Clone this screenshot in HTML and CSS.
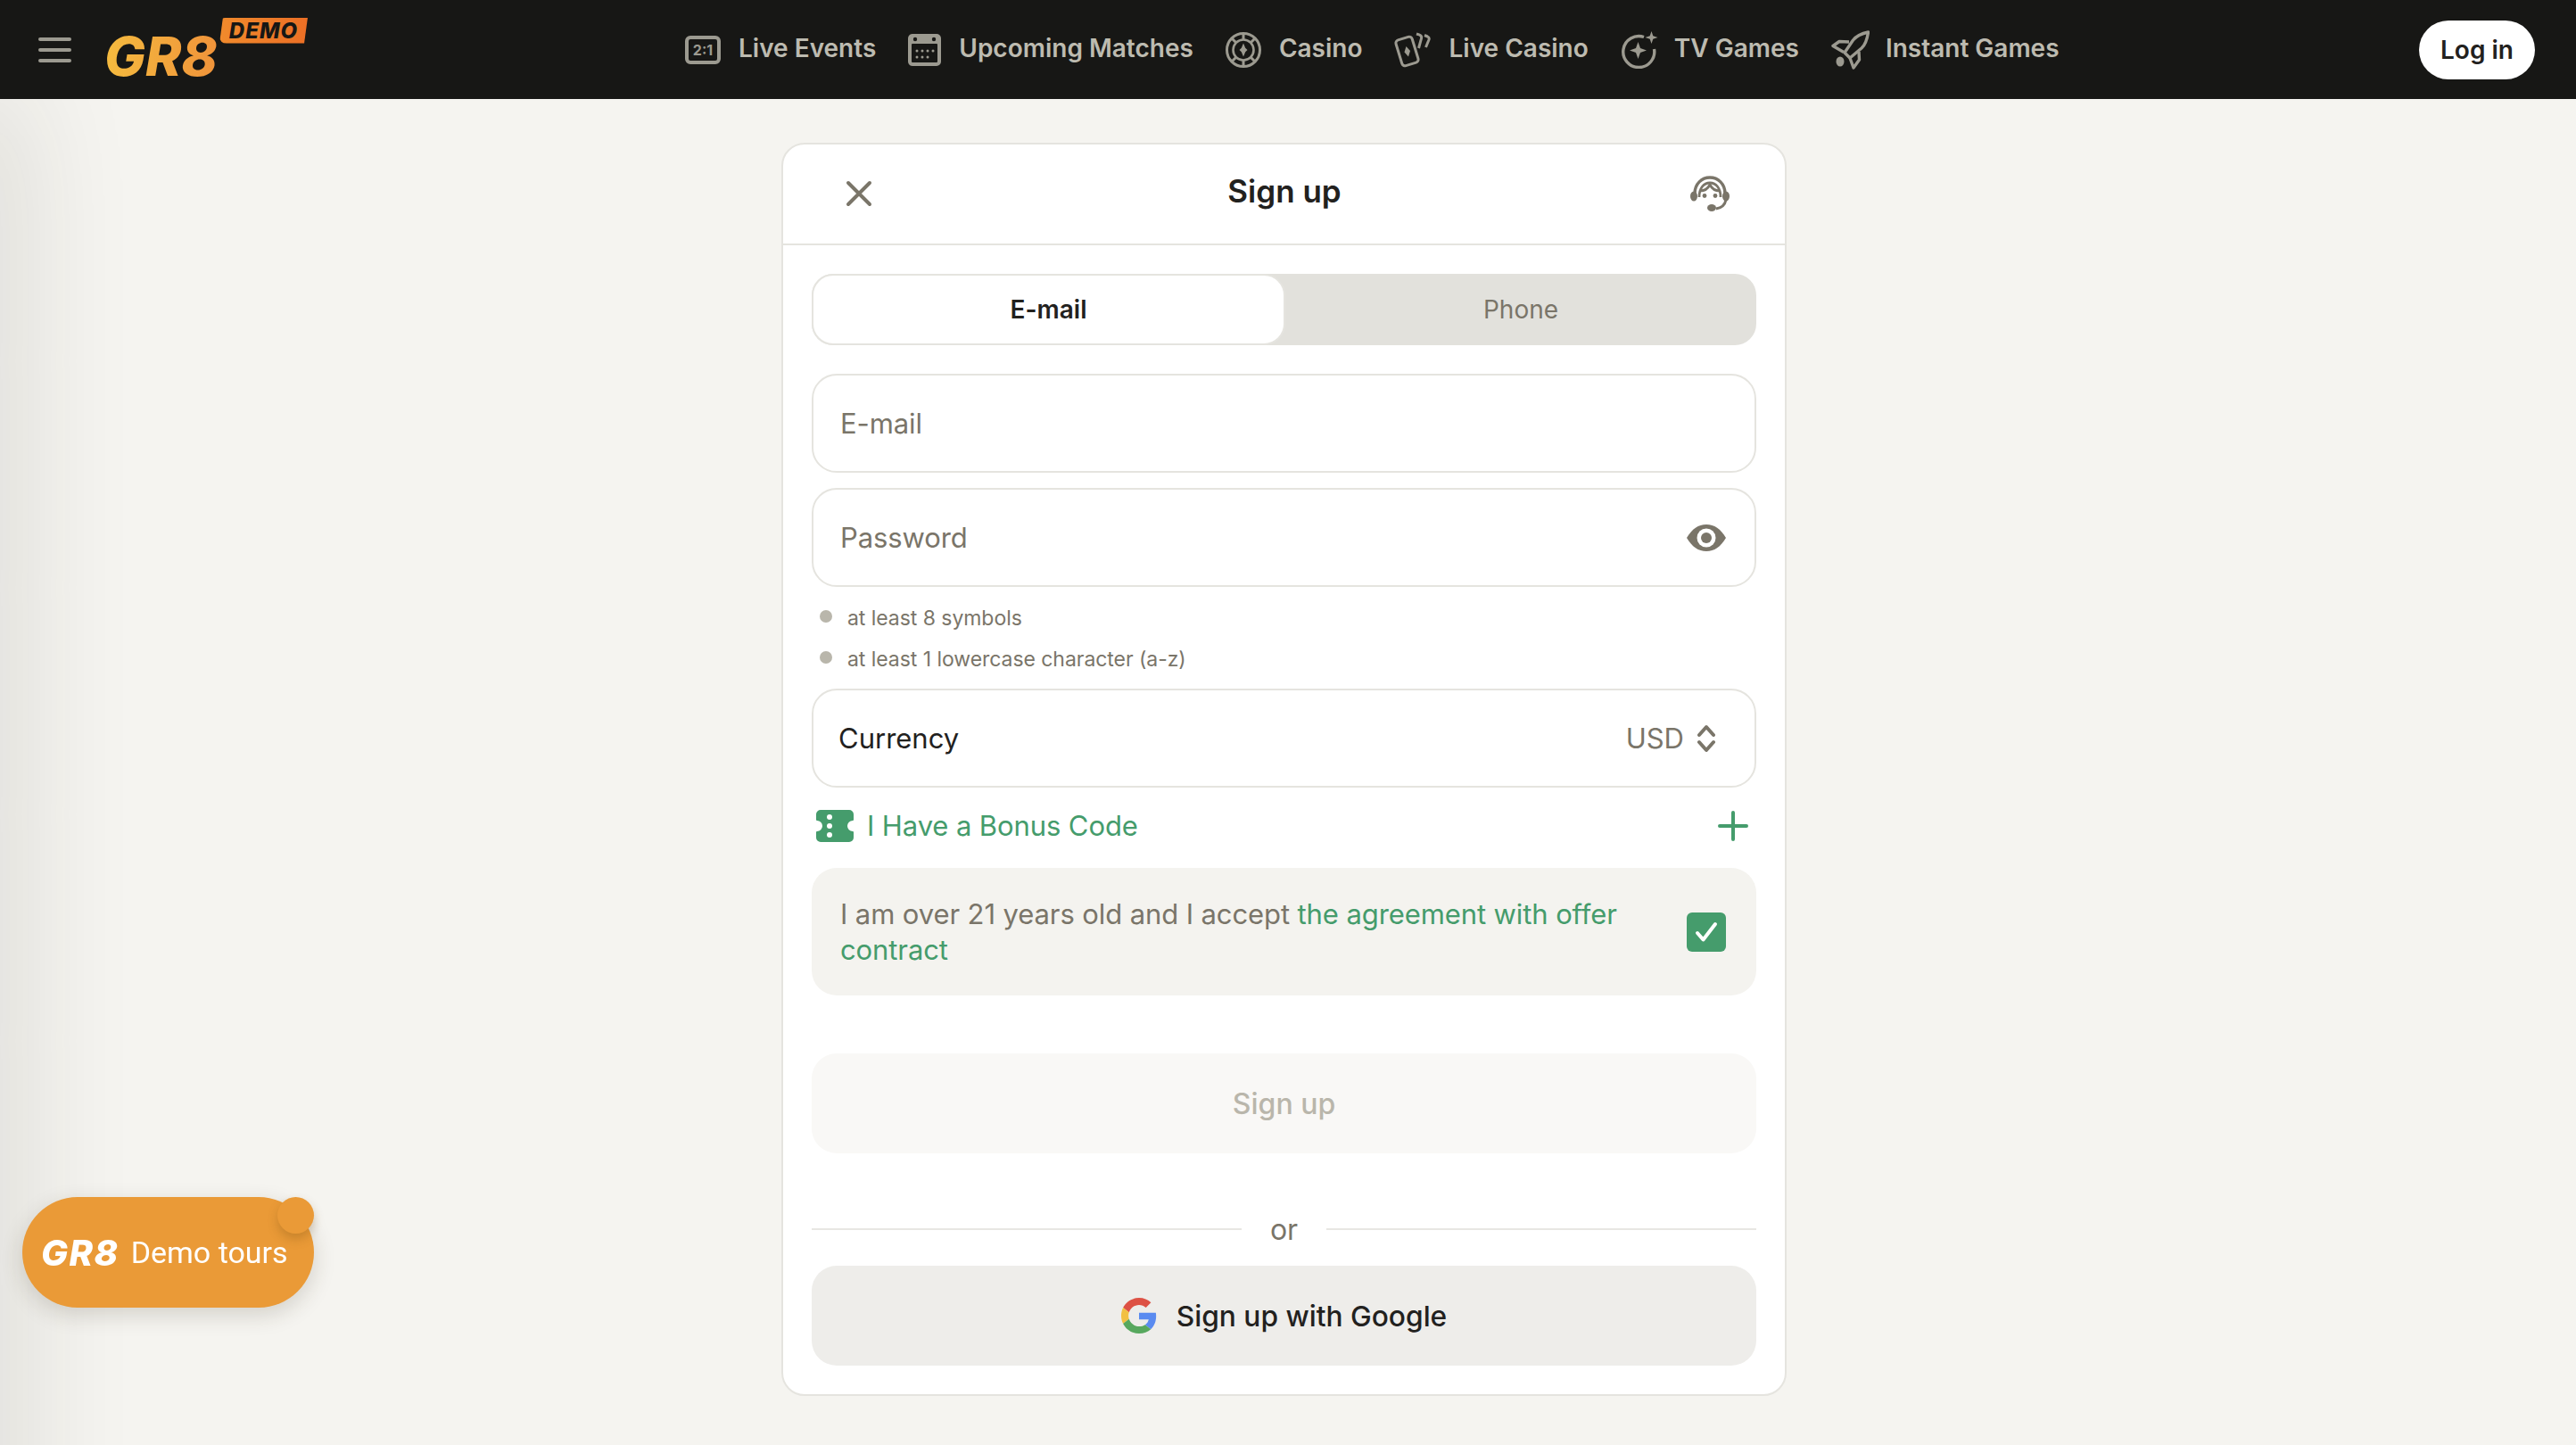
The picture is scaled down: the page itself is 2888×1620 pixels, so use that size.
FILE: index.html
```html
<!DOCTYPE html>
<html>
  <head>
    <title>Sign up</title>
    <link rel="stylesheet" href="styles.css">
  </head>
  <body>
    <div class="drawer-shadow"></div>

    <div class="navbar">
      <div class="burger"><span></span><span></span><span></span></div>
      <a class="logo" href="#">GR8<span class="demo-badge"><span>DEMO</span></span></a>
      <ul class="menu">
        <li>
          <svg class="menu-icon" width="40" height="32" viewBox="0 0 40 32">
            <rect x="2" y="2" width="36" height="28" rx="4" fill="none" stroke="#9c9a90" stroke-width="4"/>
            <text x="20" y="22" text-anchor="middle" class="score-text">2:1</text>
          </svg>
          <span>Live Events</span>
        </li>
        <li>
          <svg class="menu-icon" width="37" height="36" viewBox="0 0 37 36">
            <rect width="37" height="36" rx="5" fill="#9c9a90"/>
            <rect x="4" y="11" width="29" height="21" rx="1" fill="#171715"/>
            <circle cx="8" cy="6" r="2.2" fill="#171715"/>
            <circle cx="29" cy="6" r="2.2" fill="#171715"/>
            <g fill="#9c9a90">
              <circle cx="10" cy="19" r="1.5"/><circle cx="16" cy="19" r="1.5"/><circle cx="22" cy="19" r="1.5"/><circle cx="28" cy="19" r="1.5"/>
              <circle cx="10" cy="26" r="1.5"/><circle cx="16" cy="26" r="1.5"/><circle cx="22" cy="26" r="1.5"/>
            </g>
          </svg>
          <span>Upcoming Matches</span>
        </li>
        <li>
          <svg class="menu-icon" width="40" height="40" viewBox="0 0 40 40">
            <g fill="none" stroke="#9c9a90">
              <circle cx="20" cy="20" r="18.5" stroke-width="3"/>
              <circle cx="20" cy="20" r="11.5" stroke-width="2.600"/>
              <path d="M20 2v7M20 31v7M7 7l5 5M28 28l5 5M33 7l-5 5M12 28l-5 5" stroke-width="3"/>
            </g>
            <path d="M20 12.500l2.200 5.300 2.300 2.200-2.300 2.200L20 27.500l-2.200-5.300-2.300-2.200 2.300-2.200z" fill="#9c9a90"/>
          </svg>
          <span>Casino</span>
        </li>
        <li>
          <svg class="menu-icon" width="41" height="40" viewBox="0 0 41 40">
            <g fill="none" stroke="#9c9a90" stroke-width="3" stroke-linejoin="round">
              <rect x="5" y="6.500" width="19" height="30" rx="3.500" transform="rotate(-17 14.500 21.500)"/>
              <path d="M25 2l3 .9c2 .6 3 2.300 2.500 4.300L27.500 18"/>
              <path d="M34 3.500l3.500 1.500c1.500.7 2 2 1.500 3.500L35.500 17"/>
            </g>
            <path d="M13.500 16l4.500 5-2 6.500-4.500-5z" fill="#9c9a90"/>
          </svg>
          <span>Live Casino</span>
        </li>
        <li>
          <svg class="menu-icon" width="42" height="42" viewBox="0 0 42 42">
            <path d="M26 6.500A17.500 17.500 0 1 0 37.500 20" fill="none" stroke="#9c9a90" stroke-width="3.400"/>
            <path d="M19.500 12l2.500 7 7 2.500-7 2.500-2.500 7-2.500-7-7-2.500 7-2.500z" fill="#9c9a90"/>
            <path d="M34.500 0l1.800 5.200 5.200 1.800-5.200 1.800-1.800 5.200-1.800-5.200-5.200-1.800 5.200-1.800z" fill="#9c9a90"/>
          </svg>
          <span>TV Games</span>
        </li>
        <li>
          <svg class="menu-icon" width="43" height="44" viewBox="0 0 43 44">
            <g fill="none" stroke="#9c9a90" stroke-width="3.400" stroke-linejoin="round">
              <path d="M41.500 2c-7 1.500-13 4-17 9L15 25l6 6 13-11c5-4.500 6.500-11 7.500-18z"/>
              <path d="M20 13L9 12.500 2 17.500l12 7"/>
              <path d="M31 24l.5 9-6.500 9-4-11"/>
            </g>
            <ellipse cx="10" cy="35" rx="4.500" ry="5.500" fill="#9c9a90"/>
          </svg>
          <span>Instant Games</span>
        </li>
      </ul>
      <button class="login">Log in</button>
    </div>

    <div class="page">
      <div class="card">
        <div class="card-head">
          <svg width="30" height="30" viewBox="0 0 30 30">
            <path d="M3 3l24 24M27 3L3 27" stroke="#7a7569" stroke-width="4" stroke-linecap="round"/>
          </svg>
          <h1>Sign up</h1>
          <svg width="44" height="40" viewBox="0 0 44 40">
            <g fill="none" stroke="#7a7569">
              <path d="M5 20C5 9 13 2 22 2s17 7 17 18" stroke-width="3.400"/>
              <path d="M10 24C10 14 15 8 22 8s12 6 12 16" stroke-width="2.800"/>
              <path d="M11 17c5 0 9-3 11-7 2 4 6 7 11 7" stroke-width="2.800"/>
              <path d="M40 27c-1 5-4 9-11 10" stroke-width="3"/>
            </g>
            <g fill="#7a7569">
              <ellipse cx="4" cy="23" rx="4" ry="5.500"/>
              <ellipse cx="40" cy="23" rx="4" ry="5.500"/>
              <circle cx="16" cy="22.500" r="2.400"/>
              <circle cx="28" cy="22.500" r="2.400"/>
              <ellipse cx="24" cy="36" rx="5" ry="4"/>
            </g>
          </svg>
        </div>

        <div class="card-body">
          <div class="tabs">
            <div class="tab active">E-mail</div>
            <div class="tab">Phone</div>
          </div>

          <div class="field email-field"><span class="placeholder">E-mail</span></div>
          <div class="field password-field">
            <span class="placeholder">Password</span>
            <svg width="44" height="30" viewBox="0 0 44 30">
              <path d="M0 15C6 5 13 0 22 0s16 5 22 15c-6 10-13 15-22 15S6 25 0 15z" fill="#7a7569"/>
              <circle cx="22" cy="15" r="10.500" fill="#fff"/>
              <circle cx="22" cy="15" r="6" fill="#7a7569"/>
            </svg>
          </div>

          <ul class="hints">
            <li>at least 8 symbols</li>
            <li>at least 1 lowercase character (a-z)</li>
          </ul>

          <div class="field currency-field">
            <span>Currency</span>
            <span class="currency-value">
              USD
              <svg width="20" height="32" viewBox="0 0 20 32">
                <path d="M2 12l8-9 8 9M2 20l8 9 8-9" fill="none" stroke="#7a7569" stroke-width="4" stroke-linecap="round" stroke-linejoin="round"/>
              </svg>
            </span>
          </div>

          <div class="bonus">
            <svg width="44" height="36" viewBox="0 0 44 36">
              <path d="M6 0h32a5 5 0 0 1 5 5v6a1 1 0 0 1-1 1 6 6 0 0 0 0 12 1 1 0 0 1 1 1v6a5 5 0 0 1-5 5H6a5 5 0 0 1-5-5v-6a1 1 0 0 1 1-1 6 6 0 0 0 0-12 1 1 0 0 1-1-1V5a5 5 0 0 1 5-5z" fill="#459c6c"/>
              <circle cx="16" cy="8" r="3" fill="#fff"/>
              <circle cx="16" cy="18" r="3" fill="#fff"/>
              <circle cx="16" cy="28" r="3" fill="#fff"/>
            </svg>
            <span class="bonus-text">I Have a Bonus Code</span>
            <svg class="bonus-plus" width="34" height="34" viewBox="0 0 34 34">
              <path d="M17 2v30M2 17h30" stroke="#459c6c" stroke-width="4" stroke-linecap="round"/>
            </svg>
          </div>

          <div class="agreement">
            <p>I am over 21 years old and I accept <a href="#">the agreement with offer</a> <a href="#">contract</a></p>
            <div class="checkbox">
              <svg width="26" height="24" viewBox="0 0 26 24">
                <path d="M3 13l6.500 7.500L23 3" fill="none" stroke="#fff" stroke-width="4" stroke-linecap="round" stroke-linejoin="round"/>
              </svg>
            </div>
          </div>

          <button class="btn btn-submit">Sign up</button>

          <div class="divider"><span>or</span></div>

          <button class="btn btn-google">
            <svg width="40" height="40" viewBox="0 0 48 48">
              <path fill="#dd5144" d="M24 9.500c3.540 0 6.710 1.220 9.210 3.600l6.850-6.850C35.900 2.380 30.470 0 24 0 14.620 0 6.510 5.380 2.560 13.220l7.980 6.190C12.430 13.720 17.740 9.500 24 9.500z"/>
              <path fill="#5a8bf0" d="M46.980 24.550c0-1.570-.15-3.090-.38-4.550H24v9.020h12.940c-.58 2.960-2.260 5.480-4.780 7.180l7.730 6c4.510-4.180 7.090-10.360 7.090-17.650z"/>
              <path fill="#f2c042" d="M10.530 28.590c-.48-1.450-.76-2.990-.76-4.590s.27-3.140.76-4.590l-7.980-6.190C.92 16.460 0 20.120 0 24c0 3.880.92 7.540 2.560 10.780l7.970-6.190z"/>
              <path fill="#57a85e" d="M24 48c6.480 0 11.930-2.130 15.890-5.810l-7.730-6c-2.150 1.450-4.920 2.300-8.160 2.300-6.260 0-11.570-4.220-13.470-9.910l-7.980 6.190C6.510 42.620 14.620 48 24 48z"/>
            </svg>
            Sign up with Google
          </button>
        </div>
      </div>
    </div>

    <div class="tours">
      <span class="tours-logo">GR8</span>
      <span>Demo tours</span>
      <span class="tours-dot"></span>
    </div>
  </body>
</html>
```

FILE: styles.css
```css
* {
  box-sizing: border-box;
}

body {
  margin: 0;
  height: 1620px;
  overflow: hidden;
  background-color: #f5f4f0;
  font-family: Inter, "Noto Sans", sans-serif;
  color: #22211e;
}

.drawer-shadow {
  position: fixed;
  top: 111px;
  left: -60px;
  width: 60px;
  height: 1700px;
  border-radius: 30px;
  box-shadow: 0 0 130px 20px rgba(40, 40, 30, 0.13);
}

.navbar {
  position: relative;
  display: flex;
  align-items: center;
  height: 111px;
  padding: 0 46px 0 43px;
  background-color: #171715;
}

.burger {
  display: flex;
  flex-direction: column;
  gap: 8px;
  width: 37px;
  margin-right: 37px;
}

.burger span {
  height: 4px;
  border-radius: 2px;
  background-color: #9c9a90;
}

.logo {
  position: relative;
  top: 7px;
  width: 128px;
  font-size: 61px;
  line-height: 60px;
  font-weight: 800;
  font-style: italic;
  letter-spacing: 0;
  text-decoration: none;
  background-image: linear-gradient(90deg, #f5bb3f, #f0933a);
  -webkit-background-clip: text;
  background-clip: text;
  color: transparent;
}

.demo-badge {
  position: absolute;
  top: -13px;
  left: 129px;
  display: block;
  width: 99px;
  height: 29px;
  background-image: linear-gradient(90deg, #f08a2c, #ec6f25);
  border-radius: 6px 0 0 8px;
  clip-path: polygon(4% 0, 100% 0, 96% 100%, 0 100%);
  text-align: center;
}

.demo-badge span {
  display: block;
  font-size: 24px;
  line-height: 29px;
  font-weight: 800;
  letter-spacing: 1px;
  color: #171715;
}

.menu {
  display: flex;
  align-items: center;
  gap: 36px;
  list-style-type: none;
  margin: 0 0 0 523px;
  padding: 0;
}

.menu li {
  display: flex;
  align-items: center;
  gap: 20px;
  font-size: 28px;
  font-weight: 600;
  color: #bdbbb0;
  white-space: nowrap;
}

.menu li:nth-child(5),
.menu li:nth-child(6) {
  gap: 18px;
}

.menu li span {
  padding-bottom: 4px;
}

.score-text {
  font-size: 16px;
  font-weight: 700;
  fill: #9c9a90;
}

.login {
  width: 130px;
  height: 66px;
  margin-left: auto;
  border: 0;
  border-radius: 33px;
  background-color: #fff;
  font-family: inherit;
  font-size: 28px;
  font-weight: 600;
  color: #22211e;
}

.page {
  display: flex;
  justify-content: center;
  padding: 49px 9px 0 0;
}

.card {
  position: relative;
  width: 1127px;
  height: 1405px;
  border: 2px solid #e5e4df;
  border-radius: 26px;
  background-color: #fff;
}

.card-head {
  display: flex;
  align-items: center;
  justify-content: space-between;
  height: 113px;
  padding: 0 62px 2px 70px;
  border-bottom: 2px solid #e5e4df;
}

.card-head h1 {
  margin: 0 0 6px 7px;
  font-size: 35px;
  font-weight: 600;
}

.card-body {
  padding: 32px 32px 0;
}

.tabs {
  display: flex;
  height: 80px;
  border-radius: 24px;
  background-color: #e2e1dc;
}

.tab {
  display: flex;
  align-items: center;
  justify-content: center;
  flex: 1;
  font-size: 28px;
  color: #7a7569;
}

.tab.active {
  flex: 0 0 531px;
  border: 2px solid #e5e4df;
  border-radius: 24px;
  background-color: #fff;
  font-weight: 600;
  color: #22211e;
}

.field {
  display: flex;
  align-items: center;
  justify-content: space-between;
  height: 111px;
  padding: 0 32px 0 30px;
  border: 2px solid #e5e4df;
  border-radius: 28px;
  background-color: #fff;
  font-size: 31px;
}

.email-field {
  margin-top: 32px;
}

.password-field {
  margin-top: 17px;
}

.placeholder {
  color: #7a7569;
  letter-spacing: -0.1px;
}

.hints {
  list-style-type: none;
  margin: 17px 0 0;
  padding: 0 0 0 40px;
  height: 97px;
  font-size: 23px;
  letter-spacing: -0.05px;
  color: #7a7569;
}

.hints li {
  position: relative;
  height: 46px;
  line-height: 36px;
}

.hints li::before {
  content: "";
  position: absolute;
  top: 9px;
  left: -31px;
  width: 14px;
  height: 14px;
  border-radius: 50%;
  background-color: #b9b6ab;
}

.currency-field {
  padding-left: 28px;
  color: #22211e;
}

.currency-value {
  display: flex;
  align-items: center;
  gap: 15px;
  padding-right: 12px;
  color: #7a7569;
}

.bonus {
  display: flex;
  align-items: center;
  height: 36px;
  margin-top: 25px;
  padding: 0 9px 0 4px;
  color: #459c6c;
  font-size: 31px;
  letter-spacing: -0.1px;
}

.bonus-text {
  margin-left: 14px;
  padding-bottom: 1px;
}

.bonus-plus {
  margin-left: auto;
}

.agreement {
  display: flex;
  align-items: center;
  justify-content: space-between;
  height: 143px;
  margin-top: 29px;
  padding: 0 34px 0 32px;
  border-radius: 28px;
  background-color: #f4f3ef;
  font-size: 31px;
  line-height: 40px;
  letter-spacing: -0.1px;
  color: #7a7569;
}

.agreement p {
  width: 900px;
  margin: 0;
}

.agreement a {
  color: #459c6c;
  text-decoration: none;
}

.checkbox {
  display: flex;
  align-items: center;
  justify-content: center;
  width: 44px;
  height: 44px;
  border-radius: 6px;
  background-color: #459c6c;
}

.btn {
  display: flex;
  align-items: center;
  justify-content: center;
  width: 100%;
  height: 112px;
  border: 0;
  border-radius: 28px;
  font-family: inherit;
  font-size: 32px;
  font-weight: 500;
}

.btn-submit {
  margin-top: 65px;
  background-color: #f9f8f6;
  color: #b9b6ab;
}

.divider {
  display: flex;
  align-items: center;
  gap: 32px;
  height: 40px;
  margin-top: 65px;
  font-size: 32px;
  color: #7a7569;
}

.divider::before,
.divider::after {
  content: "";
  flex: 1;
  height: 2px;
  background-color: #e8e7e3;
}

.btn-google {
  gap: 22px;
  margin-top: 21px;
  background-color: #eeedea;
  font-size: 31.7px;
  color: #22211e;
}

.tours {
  position: fixed;
  left: 25px;
  top: 1342px;
  display: flex;
  align-items: center;
  gap: 13px;
  width: 327px;
  height: 124px;
  padding: 0 0 0 21px;
  border-radius: 62px;
  background-color: #ea9a37;
  box-shadow: 0 8px 24px rgba(60, 50, 30, 0.18);
  font-family: Roboto, sans-serif;
  font-size: 34px;
  color: #fff;
}

.tours-logo {
  font-family: Inter, sans-serif;
  font-size: 40px;
  font-weight: 800;
  font-style: italic;
  letter-spacing: 1.5px;
}

.tours-dot {
  position: absolute;
  top: 0;
  right: 0;
  width: 41px;
  height: 41px;
  border-radius: 50%;
  background-color: #ea9a37;
  box-shadow: 0 6px 12px rgba(120, 80, 20, 0.3);
}
```
